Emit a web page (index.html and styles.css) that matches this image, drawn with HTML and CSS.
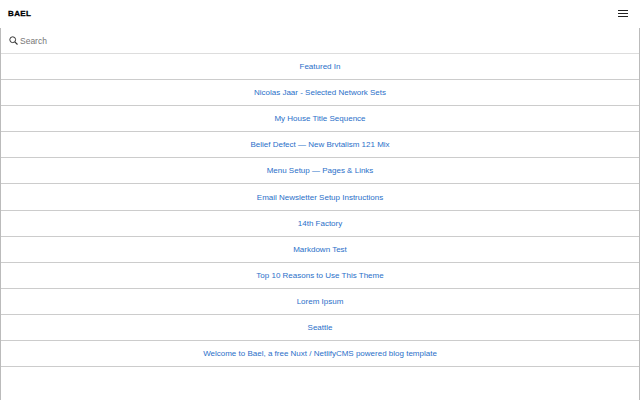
FILE: index.html
```html
<!DOCTYPE html>
<html lang="en">
<head>
<meta charset="UTF-8">
<meta name="viewport" content="width=device-width, initial-scale=1.0">
<title>Bael</title>
<link rel="stylesheet" href="styles.css">
</head>
<body>

<header class="top-bar">
  <a class="logo" href="#">BAEL</a>
  <button class="menu-button" aria-label="Menu">
    <svg width="12" height="9" viewBox="0 0 12 9"><path d="M1 1.5h10M1 4.5h10M1 7.5h10" stroke="#222" stroke-width="1"/></svg>
  </button>
</header>

<main class="panel">
  <form class="search">
    <svg width="9" height="9" viewBox="0 0 9 9"><circle cx="3.7" cy="3.7" r="2.9" fill="none" stroke="#333" stroke-width="1"/><path d="M5.8 5.8L8.5 8.5" stroke="#333" stroke-width="1.1"/></svg>
    <input type="text" placeholder="Search">
  </form>

  <ul class="post-list">
    <li><a href="#">Featured In</a></li>
    <li><a href="#">Nicolas Jaar - Selected Network Sets</a></li>
    <li><a href="#">My House Title Sequence</a></li>
    <li><a href="#">Belief Defect — New Brvtalism 121 Mix</a></li>
    <li><a href="#">Menu Setup — Pages &amp; Links</a></li>
    <li><a href="#">Email Newsletter Setup Instructions</a></li>
    <li><a href="#">14th Factory</a></li>
    <li><a href="#">Markdown Test</a></li>
    <li><a href="#">Top 10 Reasons to Use This Theme</a></li>
    <li><a href="#">Lorem Ipsum</a></li>
    <li><a href="#">Seattle</a></li>
    <li><a href="#">Welcome to Bael, a free Nuxt / NetlifyCMS powered blog template</a></li>
  </ul>
</main>

</body>
</html>
```

FILE: styles.css
```css
html, body {
  height: 100%;
}
body {
  font-family: "Liberation Sans", Arial, sans-serif;
  background-color: #fff;
  margin: 0;
  padding: 0;
  overflow: hidden;
}
.top-bar {
  display: flex;
  justify-content: space-between;
  align-items: flex-start;
  height: 28px;
  padding: 9px 11px 0 8px;
  box-sizing: border-box;
}
.logo {
  color: #000;
  font-size: 8px;
  font-weight: bold;
  letter-spacing: 0.4px;
  line-height: 10px;
  text-decoration: none;
  -webkit-text-stroke: 0.3px #000;
}
.menu-button {
  display: block;
  width: 12px;
  height: 9px;
  padding: 0;
  border: 0;
  background: none;
}
.menu-button svg {
  display: block;
}
.panel {
  height: 372px;
  border-left: 1px solid #bbb;
  border-right: 1px solid #bbb;
}
.search {
  display: flex;
  align-items: center;
  gap: 2px;
  height: 26px;
  padding-left: 8px;
  border-bottom: 1px solid #ddd;
  box-sizing: border-box;
}
.search input {
  flex: 1;
  border: 0;
  padding: 0;
  outline: none;
  font-family: inherit;
  font-size: 8.5px;
}
.search input::placeholder {
  color: #777;
}
.post-list {
  list-style: none;
  margin: 0;
  padding: 0;
}
.post-list li {
  height: 26.1px;
  box-sizing: border-box;
  border-bottom: 1px solid #ccc;
  display: flex;
  align-items: center;
  justify-content: center;
}
.post-list a {
  color: #2a6fc9;
  font-size: 8px;
  text-decoration: none;
}
```
